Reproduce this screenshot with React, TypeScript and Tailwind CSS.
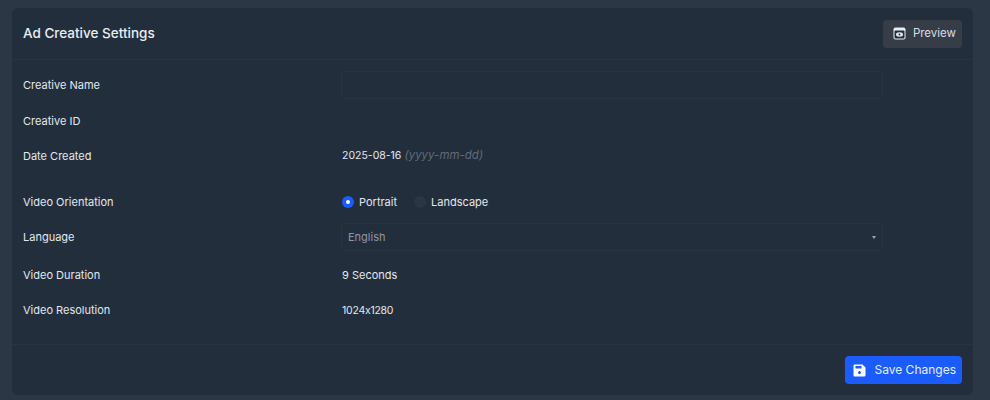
const font = "font-['Inter','Liberation_Sans',sans-serif] [font-feature-settings:'calt'_0]";

function Row({ label, className, children }: { label: string; className: string; children?: React.ReactNode }) {
  return (
    <div className={`flex items-center ${className}`}>
      <div className="w-[319px] shrink-0 text-[11px] font-normal text-[#e2e8ef]">{label}</div>
      <div className="w-[541px] text-[11px] font-normal text-[#e2e8ef]">{children}</div>
    </div>
  );
}

export default function App() {
  return (
    <div className={`h-[400px] w-[990px] overflow-hidden bg-[#2b3745] pl-3 pr-[17px] pt-2 ${font}`}>
      <div className="h-[387px] rounded-md bg-[#232e3c]">
        <div className="flex h-[52px] items-center justify-between border-b border-[#283442] px-[11px]">
          <h1 className="text-[13.5px] font-medium text-[#e8edf3]">Ad Creative Settings</h1>
          <button className="flex h-7 w-[79px] items-center justify-end gap-[7px] rounded bg-[#363d47] pr-[6px] text-[11.5px] font-normal text-[#d6dde5]">
            <svg width="13" height="13" viewBox="0 0 13 13">
              <rect x="0.5" y="0.5" width="12" height="12" rx="2" fill="#e8edf3" />
              <rect x="1.5" y="3.5" width="10" height="8" rx="1" fill="#232e3c" />
              <ellipse cx="6.5" cy="7.5" rx="3.5" ry="2.2" fill="#e8edf3" />
              <circle cx="6.5" cy="7.5" r="1" fill="#232e3c" />
            </svg>
            Preview
          </button>
        </div>
        <div className="pl-[11px]">
          <Row label="Creative Name" className="mt-[11px] h-[28px]">
            <div className="ml-[-1px] h-[28px] rounded-[3px] border border-[#283442]" />
          </Row>
          <Row label="Creative ID" className="mt-[12px] h-5" />
          <Row label="Date Created" className="mt-[15px] h-5">
            <span className="text-[10.5px]">2025-08-16</span> <span className="text-[11.500px] italic text-[#5f6b7a]">(yyyy-mm-dd)</span>
          </Row>
          <Row label="Video Orientation" className="mt-[26px] h-5">
            <div className="flex items-center">
              <span className="flex h-3 w-3 items-center justify-center rounded-full bg-[#1a5cff]">
                <span className="h-1 w-1 rounded-full bg-white" />
              </span>
              <span className="ml-[5px]">Portrait</span>
              <span className="ml-[17px] h-3 w-3 rounded-full bg-[#2a3644]" />
              <span className="ml-[5px]">Landscape</span>
            </div>
          </Row>
          <Row label="Language" className="mt-[11px] h-[28px]">
            <div className="relative ml-[-1px] flex h-[28px] items-center rounded-[3px] border border-[#283442] pl-[6px] text-[#8b96a3]">
              English
              <span className="absolute right-[6px] top-[12px] h-0 w-0 border-x-[2.5px] border-t-[3px] border-x-transparent border-t-[#9aa3ad]" />
            </div>
          </Row>
          <Row label="Video Duration" className="mt-[14px] h-5">9 Seconds</Row>
          <Row label="Video Resolution" className="mt-[15px] h-5">
            <span className="text-[10.5px] tracking-[-0.25px]">1024x1280</span>
          </Row>
        </div>
        <div className="mt-[24px] flex h-[51px] items-start justify-end border-t border-[#283442] pr-[11px] pt-[11px]">
          <button className="flex h-7 w-[117px] items-center justify-end gap-2 rounded bg-[#1a5cff] pr-[6px] text-[12px] font-normal text-[#e6edff]">
            <svg width="13" height="13" viewBox="0 0 13 13">
              <path d="M1.5 0.5h8l3 3v7.500a1.500 1.500 0 0 1-1.500 1.500h-9.500a1 1 0 0 1-1-1v-10a1 1 0 0 1 1-1z" fill="#fff" />
              <rect x="2.500" y="2" width="6" height="2.500" fill="#1a5cff" />
              <circle cx="6.500" cy="8.500" r="1.500" fill="#1a5cff" />
            </svg>
            Save Changes
          </button>
        </div>
      </div>
    </div>
  );
}
